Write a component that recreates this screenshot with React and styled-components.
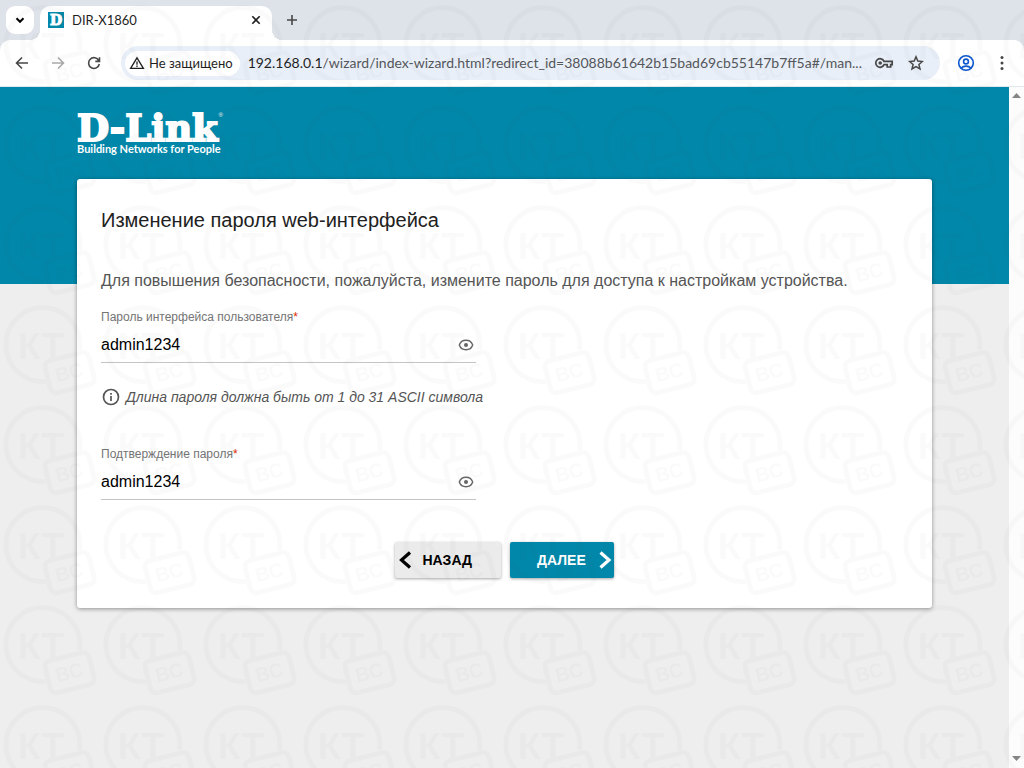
import React, { useState } from "react";
import styled, { createGlobalStyle } from "styled-components";

const TEAL = "#0087a9";

const GlobalStyle = createGlobalStyle`
  * {
    box-sizing: border-box;
  }
  body {
    margin: 0;
    font-family: "Liberation Sans", Arial, sans-serif;
  }
  button, input {
    font-family: inherit;
    margin: 0;
  }
`;

const Browser = styled.div`
  display: flex;
  flex-direction: column;
  min-height: 100vh;
  background: #dee2e9;
`;

/* ---- tab strip ---- */

const TabStrip = styled.div`
  display: flex;
  align-items: flex-start;
  gap: 6px;
  height: 40px;
  padding: 6px 6px 0;
  font-family: Lato, sans-serif;
`;

const TabSearch = styled.button`
  display: flex;
  align-items: center;
  justify-content: center;
  width: 28px;
  height: 28px;
  padding: 0;
  border: 0;
  border-radius: 9px;
  background: #fff;
`;

const Tab = styled.div`
  position: relative;
  display: flex;
  align-items: center;
  gap: 8px;
  width: 232px;
  height: 34px;
  padding: 0 8px 6px;
  border-radius: 10px 10px 0 0;
  background: #fff;

  &::before,
  &::after {
    content: "";
    position: absolute;
    bottom: 0;
    width: 10px;
    height: 10px;
  }
  &::before {
    right: 100%;
    background: radial-gradient(circle at 0 0, transparent 10px, #fff 10px);
  }
  &::after {
    left: 100%;
    background: radial-gradient(circle at 100% 0, transparent 10px, #fff 10px);
  }
`;

const Favicon = styled.span`
  width: 16px;
  height: 16px;
  background: ${TEAL};
  color: #fff;
  font: bold 14px/16px "DejaVu Serif", serif;
  text-align: center;
  -webkit-text-stroke: 1px #fff;
`;

const TabTitle = styled.span`
  flex: 1;
  color: #1f1f1f;
  font-size: 13px;
  line-height: 20px;
`;

const IconButton = styled.button`
  display: flex;
  align-items: center;
  justify-content: center;
  flex: none;
  width: ${(p) => p.$size || 28}px;
  height: ${(p) => p.$size || 28}px;
  padding: 0;
  border: 0;
  background: none;
  color: ${(p) => p.$color || "#474747"};
`;

/* ---- toolbar ---- */

const Toolbar = styled.div`
  display: flex;
  align-items: center;
  gap: 8px;
  height: 47px;
  padding: 0 8px;
  border-bottom: 1px solid #dfe9ec;
  border-radius: 10px 10px 0 0;
  background: #fff;
  font-family: Lato, sans-serif;
`;

const AddressBar = styled.div`
  display: flex;
  align-items: center;
  flex: 1;
  min-width: 0;
  height: 34px;
  margin: 0 4px 0 5px;
  padding: 0 10px 0 4px;
  border-radius: 17px;
  background: #e9eff8;
  font-size: 14px;
  line-height: 18px;
`;

const SecurityChip = styled.button`
  display: flex;
  align-items: center;
  gap: 4px;
  flex: none;
  height: 25px;
  margin-right: 8px;
  padding: 0 7px 0 4px;
  border: 0;
  border-radius: 13px;
  background: #fff;
  color: #1f1f1f;
  font-size: 13px;
`;

const Host = styled.label`
  color: #1f1f1f;
`;

const Path = styled.input`
  flex: 1;
  min-width: 0;
  padding: 0;
  border: 0;
  outline: 0;
  background: none;
  color: #54575b;
  font-size: 14px;
  line-height: 18px;
`;

const AddressActions = styled.div`
  display: flex;
  gap: 4px;
`;

/* ---- viewport ---- */

const Viewport = styled.div`
  display: flex;
  flex: 1;
`;

const Page = styled.main`
  flex: 1;
  min-width: 0;
  padding: 24px 77px;
  background: linear-gradient(${TEAL} 197px, #eee 197px);
`;

const ScrollBar = styled.div`
  display: flex;
  flex-direction: column;
  justify-content: space-between;
  width: 15px;
  background: #fcfcfc;
`;

const Logo = styled.a`
  display: block;
  height: 68px;
  color: #fff;
  text-decoration: none;
`;

const LogoName = styled.span`
  position: relative;
  display: block;
  width: 146px;
  height: 32px;
  font: bold 37px/34px "DejaVu Serif", serif;
  -webkit-text-stroke: 2px #fff;
`;

const Registered = styled.sup`
  position: absolute;
  top: 0;
  right: 0;
  font: 6px/8px "Liberation Sans", sans-serif;
  -webkit-text-stroke: 0;
`;

const Tagline = styled.span`
  display: block;
  font: bold 11px/12px Lato, sans-serif;
  white-space: nowrap;
`;

const Card = styled.form`
  display: flex;
  flex-direction: column;
  padding: 28px 24px 30px;
  border-radius: 3px;
  background: #fff;
  box-shadow: 0 1px 4px rgba(0, 0, 0, 0.4);
`;

const Title = styled.h1`
  margin: 0;
  color: #212121;
  font-size: 20px;
  font-weight: normal;
  line-height: 26px;
`;

const Intro = styled.p`
  margin: 36px 0 16px;
  color: #555;
  font-size: 16px;
  line-height: 24px;
`;

const Field = styled.div`
  max-width: 375px;
`;

const FieldLabel = styled.label`
  display: block;
  color: #757575;
  font-size: 12px;
  line-height: 16px;
`;

const Required = styled.span`
  color: #dd2c00;
`;

const FieldRow = styled.div`
  display: flex;
  align-items: center;
  height: 38px;
  padding-top: 2px;
  border-bottom: 1px solid #c4c4c4;
`;

const FieldInput = styled.input`
  flex: 1;
  min-width: 0;
  padding: 0;
  border: 0;
  outline: 0;
  background: none;
  color: #000;
  font-size: 16px;
  line-height: 24px;
`;

const Hint = styled.p`
  display: flex;
  align-items: center;
  gap: 5px;
  margin: 22px 0 37px;
  color: #555;
  font-size: 14px;
  font-style: italic;
  line-height: 24px;
`;

const Actions = styled.div`
  display: flex;
  justify-content: center;
  gap: 9px;
  margin-top: 42px;
`;

const StepButton = styled.button`
  display: flex;
  align-items: center;
  justify-content: space-between;
  width: ${(p) => (p.$primary ? 104 : 106)}px;
  height: 36px;
  padding: ${(p) => (p.$primary ? "0 2px 0 27px" : "0 29px 0 4px")};
  border: 0;
  border-radius: 2px;
  background: ${(p) => (p.$primary ? TEAL : "#ebebeb")};
  box-shadow: 0 1px 3px rgba(0, 0, 0, 0.35);
  color: ${(p) => (p.$primary ? "#fff" : "#000")};
  font-size: 14px;
  font-weight: bold;
`;

const WatermarkLayer = styled.svg`
  position: fixed;
  inset: 0;
  width: 100%;
  height: 100%;
  pointer-events: none;
`;

const Icon = ({ size = 16, width = 1.6, children }) => (
  <svg
    width={size}
    height={size}
    viewBox={`0 0 ${size} ${size}`}
    fill="none"
    stroke="currentColor"
    strokeWidth={width}
    aria-hidden="true"
  >
    {children}
  </svg>
);

const EyeIcon = () => (
  <Icon width={1.4}>
    <path d="M1.300 8C2.400 4.800 5 3.300 8 3.300S13.600 4.800 14.700 8C13.600 11.200 11 12.700 8 12.700S2.400 11.200 1.300 8Z" />
    <circle cx="8" cy="8" r="2" fill="currentColor" stroke="none" />
  </Icon>
);

const Watermark = () => (
  <WatermarkLayer aria-hidden="true">
    <defs>
      <clipPath id="letters">
        <path d="M0 0H100V47L42 60V100H0Z" />
      </clipPath>
      <pattern id="mark" x="1" width="100" height="100" patternUnits="userSpaceOnUse">
        <g fill="none" stroke="#555" strokeWidth="5">
          <path d="M78.500 50A37 37 0 1 0 45 81.500" />
          <rect x="46" y="56" width="45" height="33" rx="6" transform="rotate(-14 69 72)" />
        </g>
        <g fill="#555" fontWeight="bold" fontFamily="Liberation Sans, sans-serif">
          <text x="17" y="59" fontSize="37" clipPath="url(#letters)">
            КТ
          </text>
          <text x="54" y="79" fontSize="20" transform="rotate(-14 69 72)">
            ВС
          </text>
        </g>
      </pattern>
    </defs>
    <rect width="100%" height="100%" fill="url(#mark)" opacity="0.026" />
  </WatermarkLayer>
);

const PasswordField = ({ id, label, value, onChange }) => {
  const [visible, setVisible] = useState(true);

  return (
    <Field>
      <FieldLabel htmlFor={id}>
        {label}
        <Required>*</Required>
      </FieldLabel>
      <FieldRow>
        <FieldInput
          id={id}
          type={visible ? "text" : "password"}
          value={value}
          onChange={(e) => onChange(e.target.value)}
        />
        <IconButton
          type="button"
          $size={20}
          $color="#666"
          aria-label="Показать пароль"
          onClick={() => setVisible(!visible)}
        >
          <EyeIcon />
        </IconButton>
      </FieldRow>
    </Field>
  );
};

const BrowserTabs = () => (
  <TabStrip>
    <TabSearch aria-label="Поиск вкладок">
      <Icon width={2}>
        <path d="M4.500 6.300L8 9.800L11.500 6.300" />
      </Icon>
    </TabSearch>
    <Tab>
      <Favicon>D</Favicon>
      <TabTitle>DIR-X1860</TabTitle>
      <IconButton $size={16} $color="#1f1f1f" aria-label="Закрыть">
        <Icon>
          <path d="M4.300 4.300L11.700 11.700M11.700 4.300L4.300 11.700" />
        </Icon>
      </IconButton>
    </Tab>
    <IconButton aria-label="Новая вкладка">
      <Icon>
        <path d="M8 3V13M3 8H13" />
      </Icon>
    </IconButton>
  </TabStrip>
);

const BrowserToolbar = () => {
  const [path, setPath] = useState(
    "/wizard/index-wizard.html?redirect_id=38088b61642b15bad69cb55147b7ff5a#/man..."
  );

  return (
    <Toolbar>
      <IconButton aria-label="Назад">
        <Icon>
          <path d="M14 8H3M8 2.500L2.500 8L8 13.500" />
        </Icon>
      </IconButton>
      <IconButton $color="#a9a9a9" aria-label="Вперёд">
        <Icon>
          <path d="M2 8H13M8 2.500L13.500 8L8 13.500" />
        </Icon>
      </IconButton>
      <IconButton aria-label="Обновить">
        <Icon>
          <path d="M13.300 9A5.400 5.400 0 1 1 12.800 5.600L13.300 6.500M13.500 2.200V6.400H9.300" />
        </Icon>
      </IconButton>
      <AddressBar>
        <SecurityChip>
          <Icon width={1.300}>
            <path d="M8 2.800L14.400 13.300H1.600Z" />
            <path d="M8 6.500V9.700M8 10.600V12" />
          </Icon>
          Не защищено
        </SecurityChip>
        <Host htmlFor="address">192.168.0.1</Host>
        <Path id="address" value={path} onChange={(e) => setPath(e.target.value)} />
        <AddressActions>
          <IconButton aria-label="Пароли">
            <Icon size={20} width={1.700}>
              <path d="M10 8.300H18.200V11.600H16.700V14H13.200V11.700H10A4.300 4.300 0 1 1 10 8.300Z" />
              <circle cx="6.200" cy="10" r="1.800" fill="currentColor" stroke="none" />
            </Icon>
          </IconButton>
          <IconButton aria-label="Добавить в закладки">
            <Icon width={1.500}>
              <path d="M8 1.800L9.800 6.100L14.400 6.500L10.900 9.500L12 14L8 11.600L4 14L5.100 9.500L1.600 6.500L6.200 6.100Z" />
            </Icon>
          </IconButton>
        </AddressActions>
      </AddressBar>
      <IconButton $color="#0b57d0" aria-label="Профиль">
        <Icon size={18}>
          <circle cx="9" cy="9" r="7.300" />
          <circle cx="9" cy="7.500" r="2.400" />
          <path d="M4.200 14C6.500 11.500 11.500 11.500 13.800 14" />
        </Icon>
      </IconButton>
      <IconButton aria-label="Меню">
        <Icon>
          <g fill="currentColor" stroke="none">
            <circle cx="8" cy="2.500" r="1.500" />
            <circle cx="8" cy="8" r="1.500" />
            <circle cx="8" cy="13.500" r="1.500" />
          </g>
        </Icon>
      </IconButton>
    </Toolbar>
  );
};

const App = () => {
  const [password, setPassword] = useState("admin1234");
  const [confirm, setConfirm] = useState("admin1234");

  return (
    <Browser>
      <GlobalStyle />
      <BrowserTabs />
      <BrowserToolbar />
      <Viewport>
        <Page>
          <Logo href="#">
            <LogoName>
              D-Link<Registered>®</Registered>
            </LogoName>
            <Tagline>Building Networks for People</Tagline>
          </Logo>
          <Card onSubmit={(e) => e.preventDefault()}>
            <Title>Изменение пароля web-интерфейса</Title>
            <Intro>
              Для повышения безопасности, пожалуйста, измените пароль для доступа к
              настройкам устройства.
            </Intro>
            <PasswordField
              id="password"
              label="Пароль интерфейса пользователя"
              value={password}
              onChange={setPassword}
            />
            <Hint>
              <Icon size={20} width={1.700}>
                <circle cx="10" cy="10" r="7.500" />
                <path d="M10 9V14M10 6V7.700" />
              </Icon>
              Длина пароля должна быть от 1 до 31 ASCII символа
            </Hint>
            <PasswordField
              id="confirm"
              label="Подтверждение пароля"
              value={confirm}
              onChange={setConfirm}
            />
            <Actions>
              <StepButton type="button">
                <Icon size={18} width={3.200}>
                  <path d="M11 1.500L2.500 9L11 16.500" />
                </Icon>
                НАЗАД
              </StepButton>
              <StepButton type="submit" $primary>
                ДАЛЕЕ
                <Icon size={18} width={3.200}>
                  <path d="M6.500 1.500L15 9L6.500 16.500" />
                </Icon>
              </StepButton>
            </Actions>
          </Card>
        </Page>
        <ScrollBar>
          <IconButton $size={15} $color="#858585" aria-label="Вверх">
            <Icon size={15} width={0}>
              <path fill="currentColor" d="M3 11L7.500 6L12 11Z" />
            </Icon>
          </IconButton>
          <IconButton $size={15} $color="#858585" aria-label="Вниз">
            <Icon size={15} width={0}>
              <path fill="currentColor" d="M3 3L7.500 8L12 3Z" />
            </Icon>
          </IconButton>
        </ScrollBar>
      </Viewport>
      <Watermark />
    </Browser>
  );
};

export default App;
